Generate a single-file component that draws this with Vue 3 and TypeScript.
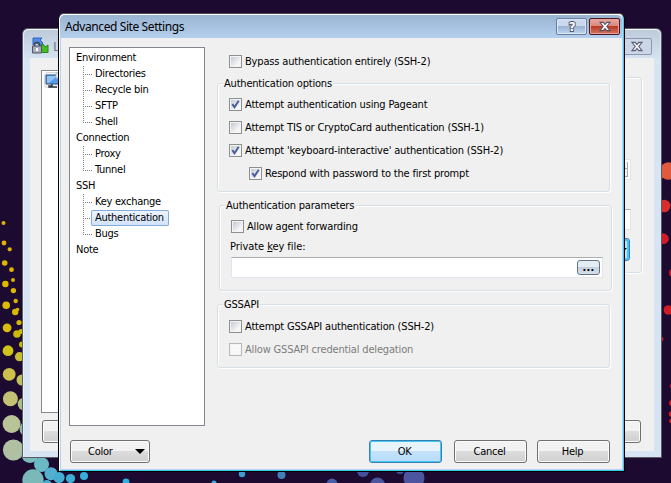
<script setup lang="ts">
interface Dot { x: number; y: number; r: number; c: string }
interface Group { label: string; children: string[] }

const d = (x: number, y: number, r: number, c: string): Dot => ({ x, y, r, c })
const dots: Dot[] = [
  d(3.5, 223, 2, '#e0b400'), d(4, 243, 2.4, '#e0b400'), d(9.7, 249.3, 2.1, '#e0b400'),
  d(4.7, 263, 2.8, '#e0b400'), d(11.5, 269.7, 2.4, '#e0b400'), d(13, 280, 2, '#d8b400'),
  d(5.4, 284, 3.2, '#dfb900'), d(13.4, 290.6, 2.7, '#dcb600'), d(15.7, 301, 2.2, '#d8b400'),
  d(6.2, 305.3, 3.8, '#dfb900'), d(15.2, 312, 3.2, '#d8b800'), d(17.5, 309.5, 1.8, '#d8b400'),
  d(19, 322.5, 2.6, '#d6b600'), d(7.1, 327.8, 4.4, '#d7bd08'), d(17, 334, 3.8, '#ccb908'),
  d(21, 331.5, 2.5, '#ccb908'), d(22, 344.5, 3, '#ccb908'), d(8, 350.7, 5.4, '#cfc417'),
  d(19.5, 356.7, 4.6, '#c6bd30'), d(9.2, 374.3, 6.4, '#ccbf4b'), d(22, 380, 5.5, '#c0c05c'),
  d(10.4, 398.7, 7.5, '#c5c174'), d(24, 404, 6.3, '#aabf86'), d(11.6, 424, 9, '#b9c398'),
  d(27, 429, 7.5, '#91b8a0'), d(13.4, 450, 10.5, '#afc1a2'), d(30, 454, 9, '#7abbbc'),
  d(41.5, 464.5, 7.5, '#6bb9c5'), d(33, 480, 10.7, '#79b9b9'), d(51, 473.7, 6.5, '#53b0ce'),
  d(59, 477.5, 5.6, '#45aed0'), d(70.5, 478.5, 4.6, '#3caed4'), d(84, 476, 4, '#38add6'),
  d(47, 485, 5, '#45aed0'), d(126, 482, 3.4, '#31afe0'), d(242, 474, 3.2, '#3f9bd0'),
  d(281.5, 475, 4, '#447fb8'), d(214, 483, 2.5, '#31afe0'), d(332, 484, 5.4, '#465da7'),
  d(363, 471, 6, '#44509b'), d(377.5, 485, 7.5, '#4c559f'), d(414, 478, 10.5, '#4c559f'),
  d(400, 470, 4, '#44509b'),
  d(668.5, 171, 8.7, '#e05b3d'), d(659, 176, 4, '#e05b3d'),
  d(664.2, 206, 6.3, '#d92c2c'), d(663.4, 238.7, 5.4, '#d01c28'), d(673, 273, 4, '#ca1825'),
  d(668.4, 310, 4.8, '#d01c25'), d(661, 339, 2.5, '#ca1825'), d(672, 386, 2.3, '#a01435'),
  d(672, 403, 3, '#d01c25'), d(671.5, 414, 2.8, '#d01c25'), d(671.5, 421, 2.4, '#d01c25'),
]
const tree: Group[] = [
  { label: 'Environment', children: ['Directories', 'Recycle bin', 'SFTP', 'Shell'] },
  { label: 'Connection', children: ['Proxy', 'Tunnel'] },
  { label: 'SSH', children: ['Key exchange', 'Authentication', 'Bugs'] },
  { label: 'Note', children: [] },
]
const selected = 'Authentication'
const options = [
  { label: 'Attempt authentication using Pageant', on: true, nested: false },
  { label: 'Attempt TIS or CryptoCard authentication (SSH-1)', on: false, nested: false },
  { label: "Attempt 'keyboard-interactive' authentication (SSH-2)", on: true, nested: false },
  { label: 'Respond with password to the first prompt', on: true, nested: true },
]
const closePath = 'M1 1.5h3.5l2 2.3 2-2.3H12L8.5 6l3.5 4.5H8.5l-2-2.3-2 2.3H1L4.5 6z'
const checkPath = 'M3.3 6.2 5.5 9.2 9.7 2.8'
</script>

<template>
  <main class="desktop">
    <svg class="wallpaper" viewBox="0 0 671 483">
      <circle v-for="(p, i) in dots" :key="i" :cx="p.x" :cy="p.y" :r="p.r" :fill="p.c" />
    </svg>

    <section class="back-window">
      <header class="back-title">
        <svg class="app-icon" viewBox="0 0 17 17">
          <path d="M1 1h9L8 3l3 3-3 3-3-3-4 2z" fill="#4f8fea" stroke="#3066ba" />
          <path d="M16 15.5H8l2-2.5-2-3 3-3 2 3 3-2z" fill="#45bd24" stroke="#288a16" />
          <path d="M2.5 9V7.7a2.5 2.5 0 0 1 5 0V9" fill="none" stroke="#454b56" stroke-width="1.5" />
          <path d="M.5 9h9v7h-9z" fill="#a9aebb" stroke="#505563" />
          <path d="M5 11v3" stroke="#fff" stroke-width="2" />
        </svg>
        <span>Login</span>
        <i class="back-close"><svg viewBox="0 0 13 12"><path :d="closePath" /></svg></i>
      </header>
      <div class="back-body">
        <div class="back-list">
          <svg viewBox="0 0 18 17">
            <rect x=".5" y=".5" width="20" height="15" rx="3" fill="#f0f0f2" stroke="#d6d6da" />
            <path d="M2 3h14v9H2z" fill="#559be5" stroke="#31537f" />
            <path d="M3 4h10L5 11H3z" fill="#90c3f4" />
            <path d="M8 12v2H5v1h8" fill="none" stroke="#303944" stroke-width="1.5" />
            <path d="M12 1h5v5h-5z" fill="#e9f1fa" stroke="#a5b5c9" />
          </svg>
        </div>
        <div class="back-group"></div>
        <i class="spinner"></i><i class="back-input"></i><i class="back-drop"></i>
        <i class="back-button left"></i><i class="back-button right"></i>
      </div>
    </section>

    <section class="dialog">
      <header class="titlebar">
        <span class="title">Advanced Site Settings</span>
        <button class="caption help" aria-label="Help">
          <svg viewBox="0 0 13 12"><text x="6.5" y="10.5" text-anchor="middle">?</text></svg>
        </button>
        <button class="caption close" aria-label="Close"><svg viewBox="0 0 13 12"><path :d="closePath" /></svg></button>
      </header>
      <div class="content">
        <nav class="tree">
          <div v-for="g in tree" :key="g.label">
            <div class="root">{{ g.label }}</div>
            <ul v-if="g.children.length">
              <li v-for="c in g.children" :key="c"><span :class="{ selected: c === selected }">{{ c }}</span></li>
            </ul>
          </div>
        </nav>
        <div class="page">
          <div class="check bypass"><i class="box"></i><span class="lbl">Bypass authentication entirely (SSH-2)</span></div>
          <section class="group auth">
            <span class="legend">Authentication options</span>
            <div v-for="o in options" :key="o.label" class="check" :class="{ nested: o.nested }">
              <i class="box"><svg v-if="o.on" viewBox="0 0 13 13"><path :d="checkPath" /></svg></i><span class="lbl">{{ o.label }}</span>
            </div>
          </section>
          <section class="group params">
            <span class="legend">Authentication parameters</span>
            <div class="check"><i class="box"></i><span class="lbl">Allow agent forwarding</span></div>
            <div class="file-label">Private <u>k</u>ey file:</div>
            <div class="file"><button class="browse">...</button></div>
          </section>
          <section class="group gss">
            <span class="legend">GSSAPI</span>
            <div class="check"><i class="box"></i><span class="lbl">Attempt GSSAPI authentication (SSH-2)</span></div>
            <div class="check off"><i class="box"></i><span class="lbl">Allow GSSAPI credential delegation</span></div>
          </section>
        </div>
      </div>
      <footer>
        <button class="btn color"><span>Color</span><svg viewBox="0 0 10 5"><path d="M0 0h10L5 5z" /></svg></button>
        <button class="btn ok">OK</button>
        <button class="btn">Cancel</button>
        <button class="btn">Help</button>
      </footer>
    </section>
  </main>
</template>

<style>
body { margin: 0; overflow: hidden; }
</style>
<style scoped>
* { box-sizing: border-box; }
.desktop { position: relative; width: 671px; height: 483px; overflow: hidden; background: #1c0a30; font: 11px/16px "DejaVu Sans Condensed", "DejaVu Sans", sans-serif; font-stretch: condensed; letter-spacing: -.27px; color: #000; }
svg { display: block; }
.wallpaper { position: absolute; inset: 0; width: 671px; height: 483px; }
button { font: inherit; letter-spacing: inherit; color: inherit; padding: 0; margin: 0; }
.back-window { position: absolute; left: 22px; top: 28px; width: 640px; height: 430px; border: 1px solid #5b5d60; border-radius: 6px 6px 0 0; background: #d7e4f4; box-shadow: inset 0 1px #f5f8fb, inset 1px 0 #e7f0f9; padding: 0 7px 7px; }
.back-title { height: 28px; display: flex; align-items: center; background: linear-gradient(#bdcbda, #d5e2f1); margin: 1px -6px 0; padding-left: 8px; border-radius: 5px 5px 0 0; }
.app-icon { width: 17px; height: 17px; margin-top: 3px; }
.back-title span { margin: 3px 0 0 4px; font: 13px/16px "Noto Sans", sans-serif; color: #6b7480; }
.back-close { margin: 4px 8px 0 auto; width: 33px; height: 17px; border: 1px solid #9096b0; border-radius: 2px; background: #cbd7e6; display: flex; align-items: center; justify-content: center; padding-left: 2px; }
.back-close svg { width: 12px; height: 11px; }
.back-close path { fill: #f4f4f8; stroke: #5b5d75; stroke-width: 1.2; }
.back-body { position: relative; height: 393px; background: #f0f0f0; }
.back-list { position: absolute; left: 11px; top: 12px; width: 50px; height: 343px; border: 1px solid #828790; background: #fff; padding: 1px 2px; }
.back-list svg { width: 18px; height: 17px; }
.back-group { position: absolute; right: 12px; top: 19px; width: 100px; height: 196px; border: 1px solid #d5dfe5; border-radius: 3px; box-shadow: inset 1px 1px #fff, 1px 1px #fff; }
.spinner { position: absolute; right: 23px; top: 101px; width: 22px; height: 21px; background: #fff; border: 1px solid #e1e3ed; }
.spinner::before, .spinner::after { content: ""; position: absolute; right: 2px; width: 8px; height: 7px; border: 1px solid #a7a7a7; background: #f4f4f4; }
.spinner::before { top: 2px; border-top: 0; } .spinner::after { bottom: 2px; }
.back-input { position: absolute; right: 23px; top: 151px; width: 30px; height: 21px; background: #fff; border: 1px solid #e1e3ed; border-top-color: #aaadb3; }
.back-drop { position: absolute; right: 24px; top: 180px; width: 30px; height: 23px; border: 1px solid #3c7fb1; border-radius: 3px; background: #bfe5fb; box-shadow: inset 0 0 0 2px #3fc7f5; }
.back-drop::after { content: ""; position: absolute; right: 2px; top: 9px; border: 4px solid transparent; border-top: 4px solid #000; border-bottom: 0; }
.back-button { position: absolute; top: 362px; width: 70px; height: 23px; border: 1px solid #707070; border-radius: 3px; background: linear-gradient(#f2f2f2 48%, #ddd 50%, #cfcfcf); box-shadow: inset 0 0 0 1px #fbfbfb; }
.back-button.left { left: 12px; } .back-button.right { right: 13px; }

.dialog { position: absolute; left: 58px; top: 13px; width: 567px; height: 459px; border: 1px solid #000; border-top-color: #4b4b50; border-radius: 6px 6px 0 0; background: #f0f0f0; box-shadow: inset 1px 1px #fff, inset -1px -1px #43c9ef, inset 2px 0 #b9d1ee, inset -2px -2px #b9d1ee; }
.titlebar { height: 23px; margin: 1px 2px 0 1px; padding: 0 2px 0 5px; display: flex; border-radius: 5px 5px 0 0; background: linear-gradient(#99b4d1, #b5cfee); }
.title { font: 12px/24px "Noto Sans", sans-serif; letter-spacing: -.4px; flex: 1; }
.caption { width: 31px; height: 17px; margin: 3px 0 0 2px; border: 1px solid #6b7e9c; border-radius: 2px; background: linear-gradient(#cbd9ee 47%, #9db3d4 50%, #bed6ef); box-shadow: inset 0 0 0 1px #dbe7f6; display: grid; place-items: center; }
.caption svg { width: 12px; height: 11px; overflow: visible; }
.caption text { font: bold 13px "DejaVu Sans", sans-serif; fill: #fff; stroke: #50566d; stroke-width: 2px; paint-order: stroke; }
.caption.close { border-color: #4d1721; background: linear-gradient(#e8a9a1, #d9877c 47%, #b83c26 50%, #d57461); box-shadow: inset 0 0 0 1px #e6a299; }
.close path { fill: #fff; stroke: #565063; stroke-width: 1.1; }
.content { display: flex; height: 388px; padding: 9px 12px 0 10px; }
.tree { width: 136px; height: 379px; flex: none; background: #fff; border: 1px solid #828790; padding: 2px 0 0 6px; }
.root { height: 16px; }
ul { list-style: none; margin: 0; padding: 0 0 0 7px; }
li { height: 16px; display: flex; position: relative; padding-left: 9px; }
li::before { content: ""; position: absolute; left: 0; top: 0; width: 1px; height: 16px; background: repeating-linear-gradient(#808080 0 1px, transparent 1px 2px); }
li:last-child::before { height: 9px; }
li::after { content: ""; position: absolute; left: 0; top: 8px; width: 9px; height: 1px; background: repeating-linear-gradient(90deg, #808080 0 1px, transparent 1px 2px); }
li span { padding: 0 3px; line-height: 16px; }
li .selected { box-shadow: inset 0 0 0 1px #84acdd; border-radius: 2px; background: linear-gradient(#eff5fd, #cfe1fc); padding-right: 5px; margin-left: -1px; padding-left: 4px; z-index: 1; }
.page { flex: 1; padding: 8px 0 0 12px; }
.check { display: flex; height: 13px; align-items: center; gap: 3px; }
.lbl { white-space: nowrap; line-height: 15px; letter-spacing: -.17px; }
.box { width: 13px; height: 13px; border: 1px solid #8e8f8f; background: linear-gradient(135deg, #c4c9d4, #f6f6f6 75%) content-box, #f4f4f4; padding: 1px; box-shadow: inset 0 0 0 1px #f4f4f4; flex: none; position: relative; }
.box svg { position: absolute; left: -1px; top: -1px; width: 13px; height: 13px; }
.box path { fill: none; stroke: #4b5e9c; stroke-width: 2; }
.bypass { margin-left: 12px; }
.group { position: relative; border: 1px solid #d5dfe5; border-radius: 3px; box-shadow: inset 1px 1px #fff, 1px 1px #fff; width: 393px; }
.legend { position: absolute; top: -8px; left: 5px; padding: 0 1px; line-height: 15px; background: #f0f0f0; letter-spacing: -.2px; }
.auth { height: 109px; margin-top: 15px; padding: 14px 0 0 11px; }
.auth .check { margin-bottom: 10px; } .auth .nested { margin-left: 20px; }
.params { height: 86px; margin: 13px 0 0 2px; padding: 14px 0 0 11px; }
.file-label { margin: 6px 0 0 -1px; line-height: 15px; letter-spacing: -.06px; }
.file { width: 372px; height: 21px; margin: 3px 0 0; background: #fff; border: 1px solid #e3e4ed; border-top-color: #abadb3; display: flex; justify-content: flex-end; padding: 2px 2px 0; }
.browse { width: 23px; height: 15px; border: 1px solid #63738a; border-radius: 3px; background: linear-gradient(#e5edf4 48%, #c3d1df 50%, #d4e0e9); font-weight: bold; line-height: 12px; letter-spacing: .2px; }
.gss { height: 64px; margin-top: 13px; padding: 15px 0 0 11px; }
.off { margin-top: 10px; color: #7c7c7c; } .off .box { border-color: #b8b8b8; background: #f8f8f8; }
footer { display: flex; padding: 14px 14px 0 11px; gap: 10px; }
.btn { width: 73px; height: 23px; border: 1px solid #707070; border-radius: 3px; background: linear-gradient(#f2f2f2 48%, #ddd 50%, #cfcfcf); box-shadow: inset 0 0 0 1px #fbfbfb; text-align: center; line-height: 21px; padding-right: 2px; }
.color { width: 80px; margin-right: auto; display: flex; align-items: center; padding: 0 4px 0 17px; justify-content: space-between; }
.color svg { width: 10px; height: 5px; }
.ok { margin-right: 2px; border-color: #3c7fb1; box-shadow: inset 0 0 0 1px #42c8f4; background: linear-gradient(#e8f4fc 48%, #c4e1fb 50%, #b8dcfa); }
</style>
